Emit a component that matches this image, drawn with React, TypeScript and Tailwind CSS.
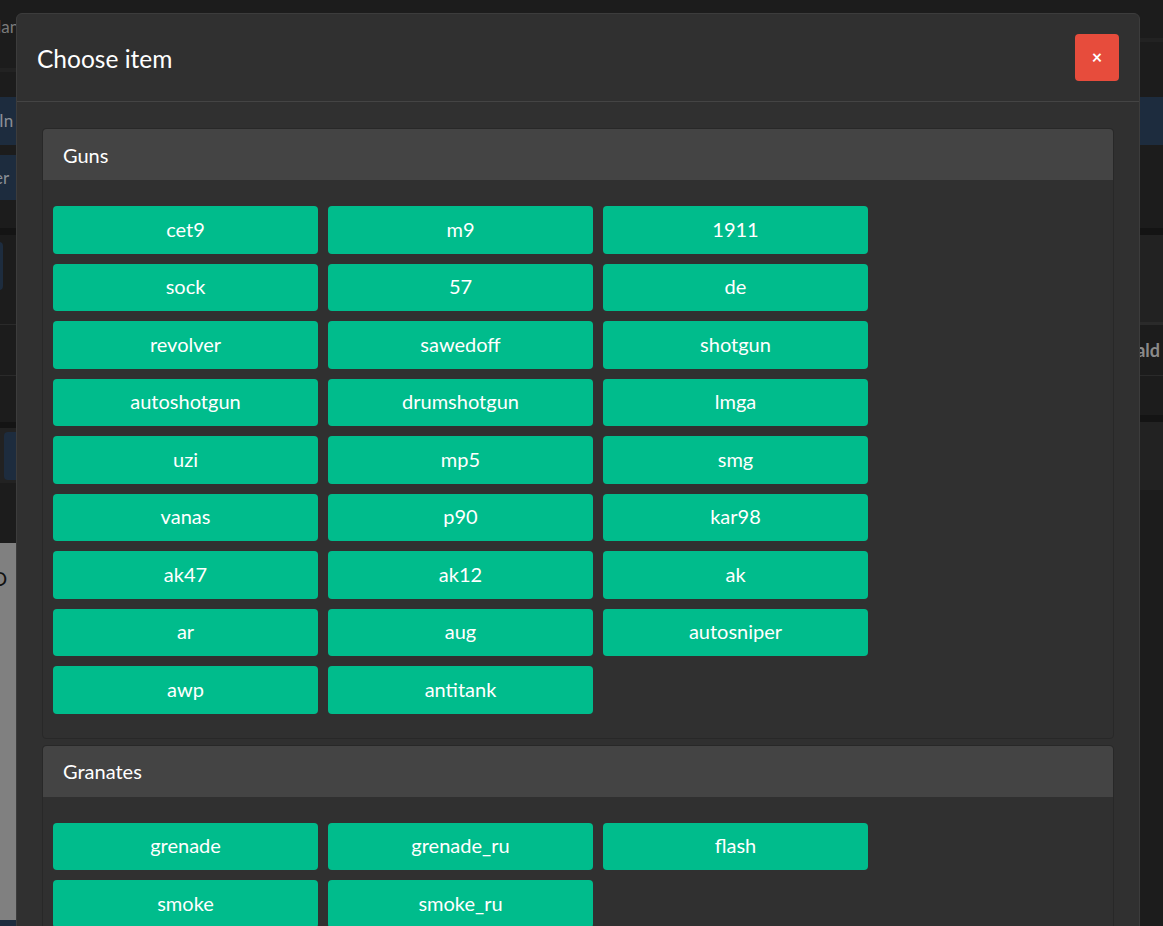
import React from 'react';

const guns = [
  'cet9', 'm9', '1911',
  'sock', '57', 'de',
  'revolver', 'sawedoff', 'shotgun',
  'autoshotgun', 'drumshotgun', 'lmga',
  'uzi', 'mp5', 'smg',
  'vanas', 'p90', 'kar98',
  'ak47', 'ak12', 'ak',
  'ar', 'aug', 'autosniper',
  'awp', 'antitank',
];

const granates = ['grenade', 'grenade_ru', 'flash', 'smoke', 'smoke_ru'];

const ItemCard: React.FC<{ title: string; items: string[] }> = ({ title, items }) => (
  <div className="mb-[6px] rounded-[4px] border border-[#282828] bg-[#303030]">
    <div className="flex h-[51px] items-center rounded-t-[4px] bg-[#444444] px-5 text-[20px] text-white">
      {title}
    </div>
    <div className="grid grid-cols-[repeat(3,265px)] gap-[10px] px-[10px] pt-[26px] pb-[24px]">
      {items.map((item) => (
        <button
          key={item}
          className="flex h-[47.5px] items-center justify-center rounded-[4px] bg-[#00bc8c] pb-[2px] text-[20px] text-white"
        >
          {item}
        </button>
      ))}
    </div>
  </div>
);

const App: React.FC = () => {
  return (
    <div className="relative h-[926px] w-full overflow-hidden bg-[#1c1c1c] font-['Lato','Liberation_Sans',sans-serif]">
      {/* page behind the dialog */}
      <div className="flex h-full">
        <div className="flex w-[580px] flex-col">
          <div className="flex h-[68px] items-center pb-[14px] text-[17px] text-[#7a7a7a]">
            <span className="-ml-[14px]">Clan</span>
          </div>
          <div className="h-[4px] bg-[#222]" />
          <div className="h-[25px]" />
          <div className="flex h-[48px] items-center bg-[#1d2c3e] text-[17px] text-[#8a8f96]">
            <span className="-ml-[1px]">In</span>
          </div>
          <div className="h-[10px]" />
          <div className="flex h-[45px] items-center bg-[#1d2c3e] text-[17px] text-[#8a8f96]">
            <span className="-ml-[6px]">er</span>
          </div>
          <div className="h-[28px]" />
          <div className="h-[7px] bg-[#141414]" />
          <div className="flex h-[89px] items-start pt-[7px]">
            <div className="-ml-[10px] h-[48px] w-[13px] rounded-[4px] bg-[#1d2c3e]" />
          </div>
          <div className="h-px bg-[#2a2a2a]" />
          <div className="h-[50px]" />
          <div className="h-px bg-[#2a2a2a]" />
          <div className="h-[46px]" />
          <div className="h-[6px] bg-[#141414]" />
          <div className="flex h-[55px] items-center bg-[#222] pl-[4px]">
            <div className="h-[48px] w-[30px] rounded-[4px] bg-[#1d2c3e]" />
          </div>
          <div className="h-[60px]" />
          <div className="flex-1 bg-[#808080] pt-[20px] text-[20px] text-[#111]">
            <span className="-ml-[8px]">D</span>
          </div>
          <div className="h-[6px] bg-[#1d2c3e]" />
        </div>
        <div className="flex flex-1 flex-col">
          <div className="h-[38px]" />
          <div className="h-[4px] bg-[#222]" />
          <div className="h-[55px]" />
          <div className="h-[48px] bg-[#1d2c3e]" />
          <div className="h-[83px]" />
          <div className="h-[7px] bg-[#141414]" />
          <div className="h-[87px] bg-[#222]" />
          <div className="h-[3px] bg-[#2a2a2a]" />
          <div className="flex h-[50px] items-center justify-end pr-[3px] text-[18px] font-bold text-[#8a8a8a]">
            Emerald
          </div>
          <div className="h-px bg-[#2a2a2a]" />
          <div className="h-[39px]" />
          <div className="h-[7px] bg-[#141414]" />
          <div className="h-[68px] bg-[#222]" />
          <div className="flex-1" />
        </div>
      </div>

      {/* dialog */}
      <div className="fixed inset-0 pt-[13px] pl-[16px]">
        <div className="w-[1124px] rounded-[6px] border border-[#3c3c3c] bg-[#303030]">
          <div className="flex items-center justify-between border-b border-[#444] px-5 py-[20px]">
            <h4 className="mt-[3px] text-[24.5px] leading-none text-white">Choose item</h4>
            <button className="flex h-[47px] w-[44px] items-center justify-center rounded-[4px] bg-[#e74c3c] text-[18px] font-bold text-white">
              ×
            </button>
          </div>
          <div className="px-[25px] pt-[26px]">
            <ItemCard title="Guns" items={guns} />
            <ItemCard title="Granates" items={granates} />
          </div>
        </div>
      </div>
    </div>
  );
};

export default App;
